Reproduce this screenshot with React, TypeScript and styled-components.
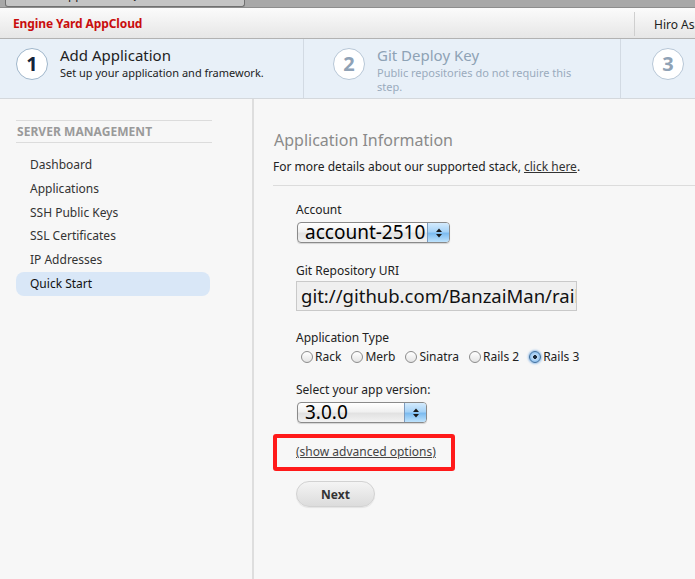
import React from "react";
import styled, { createGlobalStyle } from "styled-components";

const Global = createGlobalStyle`
  html, body { margin: 0; padding: 0; }
  body {
    background: #f7f7f7;
    font-family: "Noto Sans", "DejaVu Sans", sans-serif;
    color: #222;
    width: 695px;
    height: 579px;
    overflow: hidden;
  }
`;

const Page = styled.div`
  display: flex;
  flex-direction: column;
  width: 695px;
  height: 579px;
  overflow: hidden;
`;

const TabStrip = styled.div`
  height: 8px;
  background: #a8a8a8;
  display: flex;
  padding-left: 5px;
  box-sizing: border-box;
  border-bottom: 1px solid #8d8d8d;
`;

const BrowserTab = styled.div`
  width: 240px;
  height: 7px;
  box-sizing: border-box;
  background: #c4c4c4;
  border: 1px solid #707070;
  border-top: none;
  border-radius: 0 0 3px 3px;
  overflow: hidden;
  display: flex;
  justify-content: center;
`;

const TabText = styled.span`
  font-size: 12px;
  line-height: 14px;
  margin-top: -12px;
  color: #222;
  white-space: nowrap;
`;

const Header = styled.header`
  height: 30px;
  display: flex;
  align-items: stretch;
  justify-content: space-between;
  background: linear-gradient(#fbfbfb, #e6e6e6);
  border-bottom: 1px solid #b2b2b2;
`;

const Brand = styled.div`
  padding: 1px 0 0 13px;
  font-size: 12px;
  font-weight: bold;
  line-height: 30px;
  color: #c90d0d;
  letter-spacing: -0.1px;
`;

const UserBox = styled.div`
  margin: 4px 0 2px;
  border-left: 1px solid #cfcfcf;
  padding: 1px 0 0 19px;
  width: 41px;
  font-size: 12px;
  line-height: 24px;
  color: #222;
  white-space: nowrap;
  overflow: hidden;
`;

const Steps = styled.nav`
  height: 60px;
  box-sizing: border-box;
  display: grid;
  grid-template-columns: 303px 317px 1fr;
  background: #e8f0f8;
  border-bottom: 1px solid #d4d8dc;
`;

const Step = styled.div<{ $pad: number; $first?: boolean }>`
  display: flex;
  align-items: flex-start;
  gap: 12px;
  padding: 9px 0 0 ${(p) => p.$pad}px;
  border-left: ${(p) => (p.$first ? "none" : "1px solid #d2dae3")};
`;

const Circle = styled.div<{ $active?: boolean }>`
  flex: none;
  width: 32px;
  height: 32px;
  box-sizing: border-box;
  border-radius: 50%;
  background: #fff;
  border: 1.5px solid ${(p) => (p.$active ? "#9fb6cb" : "#b7c7d7")};
  display: flex;
  align-items: center;
  justify-content: center;
  font-size: 20px;
  font-weight: bold;
  color: ${(p) => (p.$active ? "#15243a" : "#8fa2b6")};
  line-height: 1;
`;

const StepText = styled.div`
  display: flex;
  flex-direction: column;
  margin-top: -2px;
  max-width: 210px;
`;

const StepTitle = styled.div<{ $active?: boolean }>`
  font-size: 15px;
  line-height: 18px;
  color: ${(p) => (p.$active ? "#1e1e1e" : "#8ea2b5")};
  white-space: nowrap;
`;

const StepSub = styled.div<{ $active?: boolean }>`
  margin-top: 2px;
  font-size: 11px;
  line-height: 14px;
  color: ${(p) => (p.$active ? "#222" : "#9aabbd")};
`;

const Body = styled.div`
  flex: 1;
  display: flex;
`;

const Sidebar = styled.aside`
  width: 254px;
  flex: none;
  box-sizing: border-box;
  padding: 21px 40px 0 16px;
  border-right: 2px solid #dedede;
`;

const SideHeading = styled.div`
  border-top: 1px solid #dcdcdc;
  border-bottom: 1px solid #dcdcdc;
  height: 23px;
  box-sizing: border-box;
  padding-left: 1px;
  font-size: 12px;
  font-weight: bold;
  line-height: 21px;
  color: #9a9a9a;
  letter-spacing: 0.05px;
`;

const NavList = styled.ul`
  list-style: none;
  margin: 10px 2px 0 0;
  padding: 0;
`;

const NavItem = styled.li<{ $active?: boolean }>`
  height: 23.8px;
  line-height: 23.8px;
  padding-left: 14px;
  font-size: 12px;
  color: ${(p) => (p.$active ? "#111" : "#333")};
  background: ${(p) => (p.$active ? "#d9e7f7" : "transparent")};
  border-radius: 8px;
`;

const Main = styled.main`
  flex: 1;
  padding: 31px 0 0 19px;
  display: flex;
  flex-direction: column;
  align-items: flex-start;
`;

const Title = styled.h2`
  margin: 0 0 0 1px;
  font-size: 16px;
  font-weight: normal;
  line-height: 20px;
  color: #8a8a8a;
`;

const Lead = styled.p`
  margin: 9px 0 0;
  font-size: 12px;
  line-height: 16px;
  color: #222;
`;

const LeadLink = styled.a`
  color: #333;
  text-decoration: underline;
`;

const Rule = styled.hr`
  align-self: stretch;
  margin: 10px 0 0 0;
  border: none;
  border-top: 1px solid #dcdcdc;
  height: 0;
`;

const Form = styled.div`
  display: flex;
  flex-direction: column;
  align-items: flex-start;
  padding-left: 23px;
`;

const Label = styled.div<{ $top: number }>`
  margin-top: ${(p) => p.$top}px;
  font-size: 12px;
  line-height: 15px;
  color: #222;
`;

const Select = styled.div<{ $w: number; $top: number }>`
  margin-top: ${(p) => p.$top}px;
  margin-left: 1px;
  width: ${(p) => p.$w}px;
  height: 21px;
  box-sizing: border-box;
  border: 1px solid #8a8a8a;
  border-radius: 4px;
  background: linear-gradient(#ffffff, #f1f1f1 45%, #e2e2e2 55%, #f2f2f2);
  display: flex;
  overflow: hidden;
  box-shadow: 0 1px 1px rgba(0, 0, 0, 0.15);
`;

const SelectValue = styled.div`
  flex: 1;
  padding-left: 7px;
  font-size: 19px;
  line-height: 19px;
  color: #000;
  white-space: nowrap;
  overflow: hidden;
`;

const SelectArrows = styled.div`
  width: 21px;
  flex: none;
  border-left: 1px solid #7d9bbd;
  background: linear-gradient(#d4ebfd, #a7d3f7 45%, #7dbcf0 55%, #bfe3fd);
  display: flex;
  align-items: center;
  justify-content: center;
`;

const TextField = styled.div`
  margin-top: 3px;
  width: 281px;
  height: 30px;
  box-sizing: border-box;
  border: 1px solid #c9c9c9;
  background: #efefef;
  padding-left: 4px;
  font-size: 18.5px;
  line-height: 28px;
  color: #111;
  white-space: nowrap;
  overflow: hidden;
`;

const RadioRow = styled.div`
  margin-top: 4px;
  margin-left: 5px;
  display: flex;
  gap: 10px;
  font-size: 12px;
  line-height: 16px;
`;

const RadioOption = styled.label`
  display: flex;
  align-items: center;
  gap: 2px;
  color: #222;
`;

const RadioDot = styled.span<{ $on?: boolean }>`
  width: 12px;
  height: 12px;
  box-sizing: border-box;
  border-radius: 50%;
  border: 1px solid ${(p) => (p.$on ? "#3d6e9e" : "#8c8c8c")};
  background: ${(p) =>
    p.$on
      ? "radial-gradient(circle, #1b2a3a 0 1.6px, #bfdcf7 2.2px, #6faee6 100%)"
      : "linear-gradient(#ffffff, #e4e4e4)"};
  box-shadow: ${(p) => (p.$on ? "0 0 2px 1px rgba(80,150,220,0.55)" : "none")};
`;

const Callout = styled.div`
  margin: 11px 0 0 -23px;
  width: 182px;
  height: 37px;
  box-sizing: border-box;
  border: 4px solid #ff1a1a;
  border-radius: 3px;
  padding: 1px 0 0 19px;
`;

const AdvancedLink = styled.a`
  font-size: 12px;
  line-height: 15px;
  color: #444;
  text-decoration: underline;
  white-space: nowrap;
`;

const NextButton = styled.button`
  margin-top: 10px;
  width: 79px;
  height: 26px;
  border-radius: 13px;
  border: 1px solid #d2d2d2;
  background: linear-gradient(#f4f4f4, #dcdcdc);
  font-family: "Noto Sans", "DejaVu Sans", sans-serif;
  font-size: 12px;
  font-weight: bold;
  color: #333;
  padding: 0;
  box-shadow: 0 1px 1px rgba(0, 0, 0, 0.08);
`;

const Arrows = () => (
  <svg width="8" height="12" viewBox="0 0 8 12">
    <path d="M4 1.5 L7 5 H1 Z" fill="#1a1a1a" />
    <path d="M4 10.5 L7 7 H1 Z" fill="#1a1a1a" />
  </svg>
);

const navItems = [
  "Dashboard",
  "Applications",
  "SSH Public Keys",
  "SSL Certificates",
  "IP Addresses",
  "Quick Start",
];

const appTypes = ["Rack", "Merb", "Sinatra", "Rails 2", "Rails 3"];

export default function App() {
  return (
    <Page>
      <Global />
      <TabStrip>
        <BrowserTab>
          <TabText>AppCloud – Quick Start</TabText>
        </BrowserTab>
      </TabStrip>
      <Header>
        <Brand>Engine Yard AppCloud</Brand>
        <UserBox>Hiro Asari</UserBox>
      </Header>
      <Steps>
        <Step $pad={16} $first>
          <Circle $active>1</Circle>
          <StepText>
            <StepTitle $active>Add Application</StepTitle>
            <StepSub $active>Set up your application and framework.</StepSub>
          </StepText>
        </Step>
        <Step $pad={29}>
          <Circle>2</Circle>
          <StepText>
            <StepTitle>Git Deploy Key</StepTitle>
            <StepSub>Public repositories do not require this step.</StepSub>
          </StepText>
        </Step>
        <Step $pad={31}>
          <Circle>3</Circle>
        </Step>
      </Steps>
      <Body>
        <Sidebar>
          <SideHeading>SERVER MANAGEMENT</SideHeading>
          <NavList>
            {navItems.map((n) => (
              <NavItem key={n} $active={n === "Quick Start"}>
                {n}
              </NavItem>
            ))}
          </NavList>
        </Sidebar>
        <Main>
          <Title>Application Information</Title>
          <Lead>
            For more details about our supported stack, <LeadLink>click here</LeadLink>.
          </Lead>
          <Rule />
          <Form>
            <Label $top={16}>Account</Label>
            <Select $w={153} $top={5}>
              <SelectValue>account-2510</SelectValue>
              <SelectArrows>
                <Arrows />
              </SelectArrows>
            </Select>
            <Label $top={20}>Git Repository URI</Label>
            <TextField>git://github.com/BanzaiMan/rails3_app.git</TextField>
            <Label $top={19}>Application Type</Label>
            <RadioRow>
              {appTypes.map((t) => (
                <RadioOption key={t}>
                  <RadioDot $on={t === "Rails 3"} />
                  {t}
                </RadioOption>
              ))}
            </RadioRow>
            <Label $top={17}>Select your app version:</Label>
            <Select $w={130} $top={5}>
              <SelectValue>3.0.0</SelectValue>
              <SelectArrows>
                <Arrows />
              </SelectArrows>
            </Select>
            <Callout>
              <AdvancedLink>(show advanced options)</AdvancedLink>
            </Callout>
            <NextButton>Next</NextButton>
          </Form>
        </Main>
      </Body>
    </Page>
  );
}
